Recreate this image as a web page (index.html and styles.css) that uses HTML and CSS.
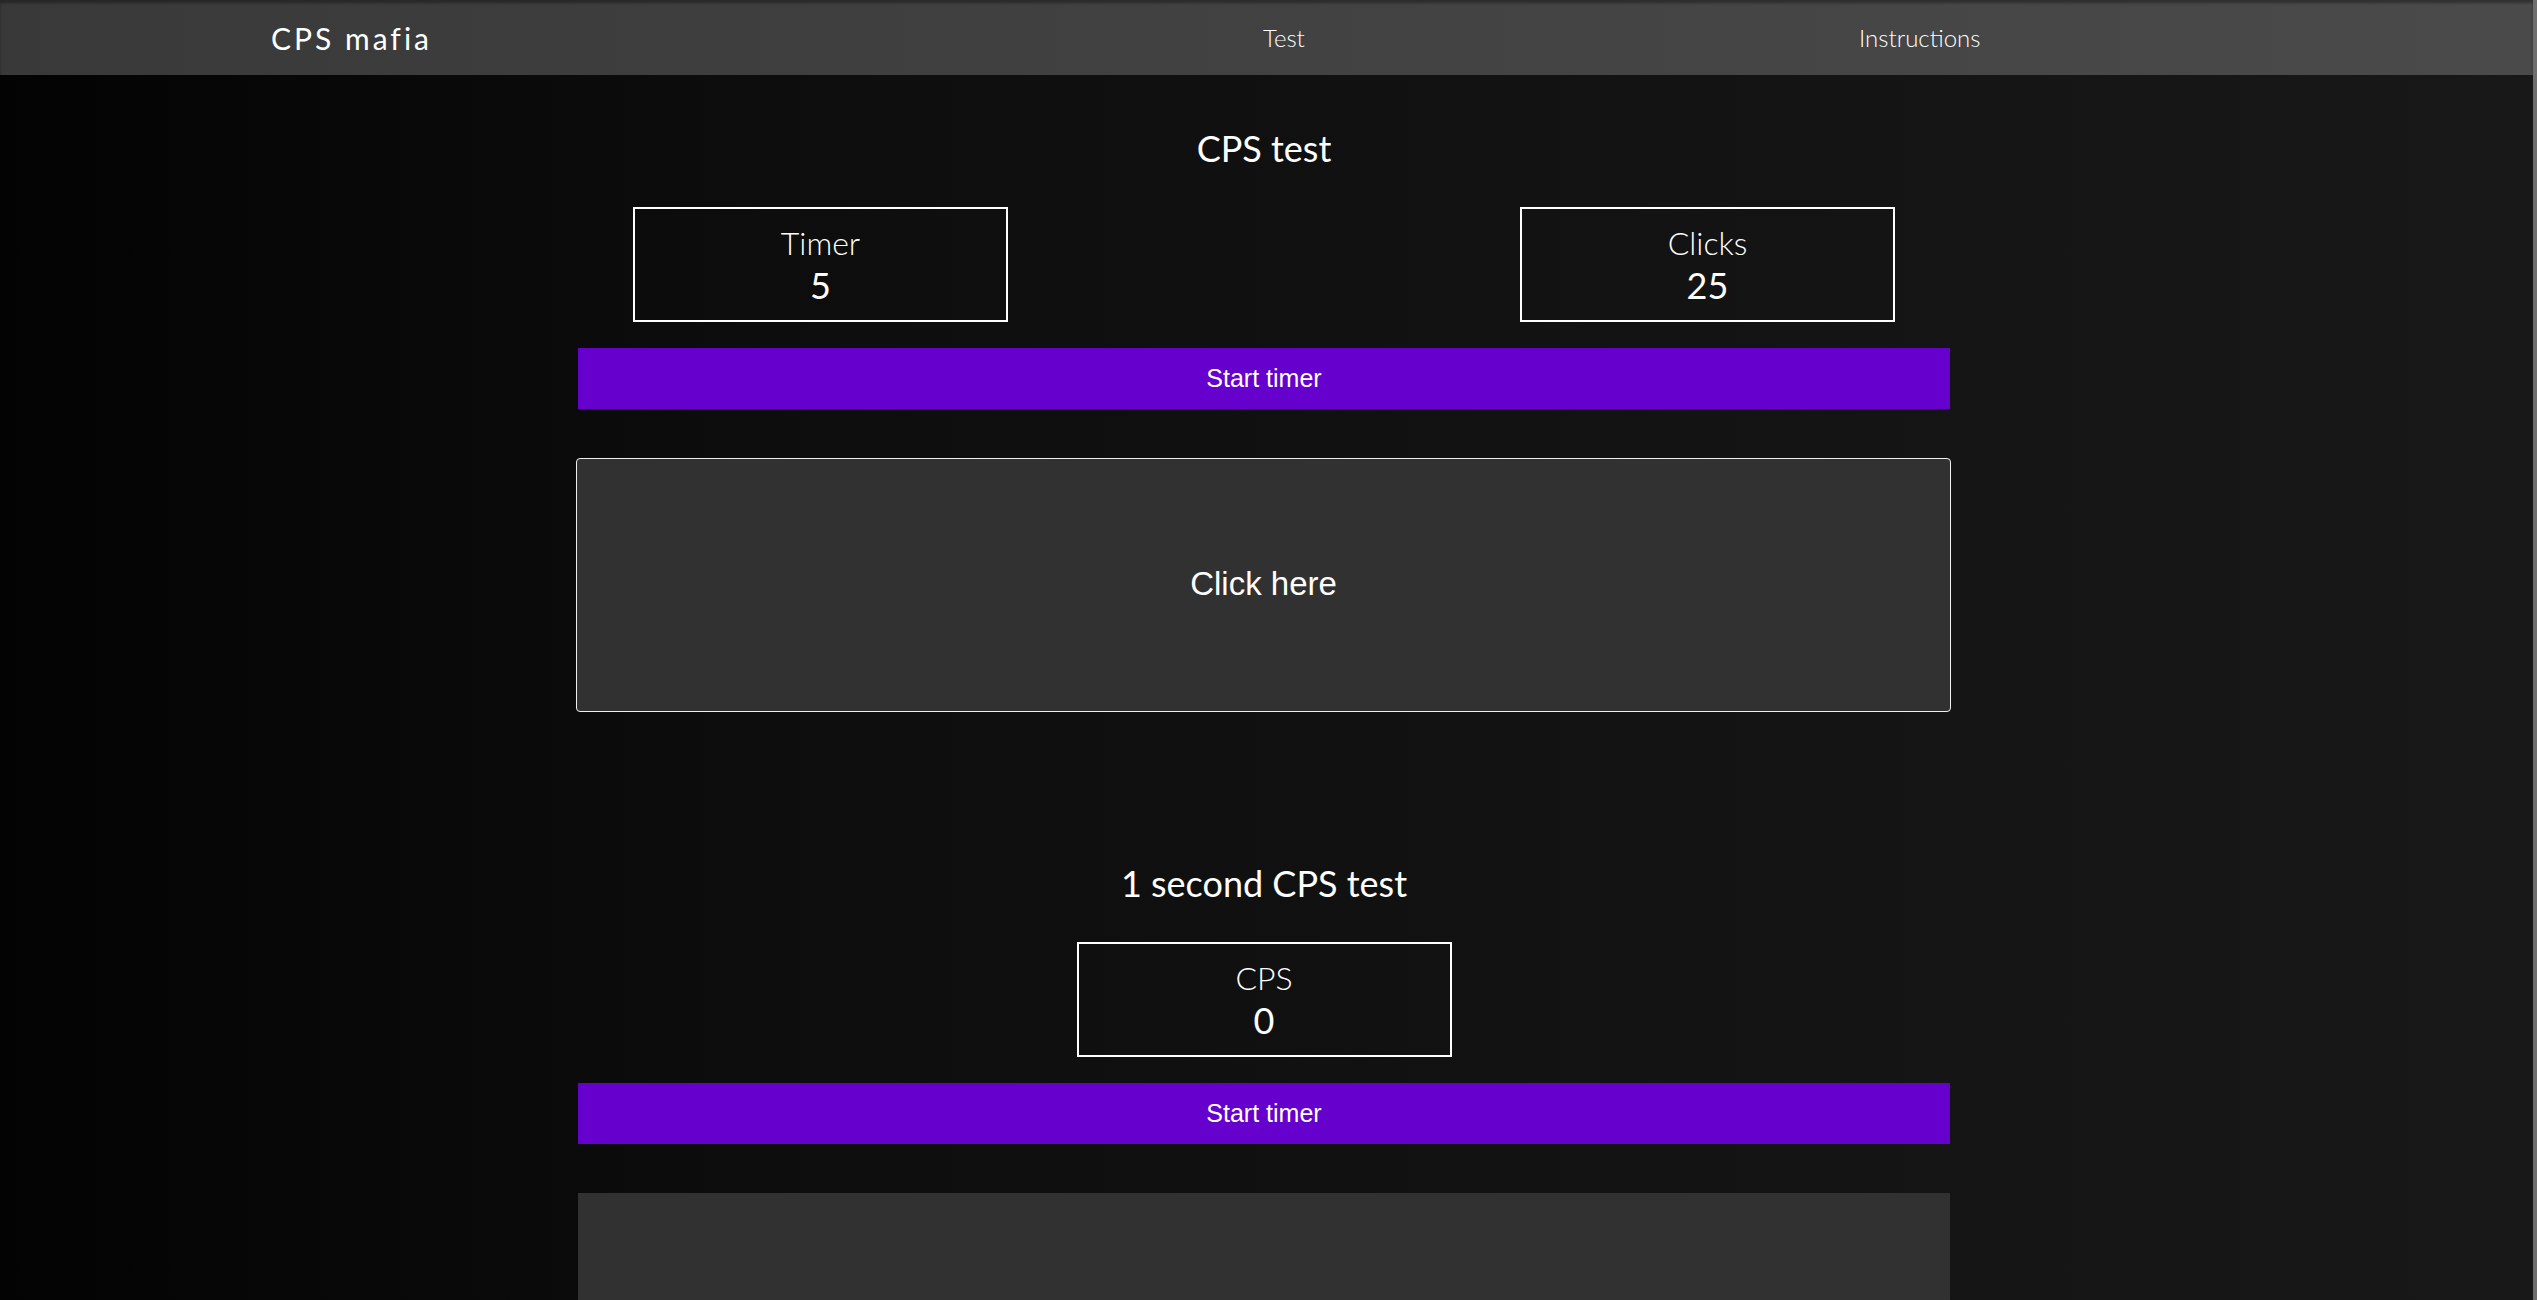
FILE: index.html
```html
<!DOCTYPE html>
<html lang="en">
<head>
<meta charset="utf-8">
<title>CPS mafia</title>
<link rel="stylesheet" href="styles.css">
</head>
<body>
<div class="page">
  <nav class="nav">
    <a class="brand" href="#">CPS mafia</a>
    <a class="nav-link" href="#">Test</a>
    <a class="nav-link" href="#">Instructions</a>
  </nav>
  <main class="main">
    <section class="test">
      <h2 class="title">CPS test</h2>
      <div class="stats">
        <div class="stat">
          <div class="stat-label">Timer</div>
          <div class="stat-value">5</div>
        </div>
        <div class="stat">
          <div class="stat-label">Clicks</div>
          <div class="stat-value">25</div>
        </div>
      </div>
      <button class="start">Start timer</button>
      <div class="click-area">Click here</div>
    </section>
    <section class="test second">
      <h2 class="title">1 second CPS test</h2>
      <div class="stats center">
        <div class="stat">
          <div class="stat-label">CPS</div>
          <div class="stat-value">0</div>
        </div>
      </div>
      <button class="start">Start timer</button>
      <div class="click-area plain"></div>
    </section>
  </main>
</div>
</body>
</html>
```

FILE: styles.css
```css
html, body {
  margin: 0;
  padding: 0;
  height: 100%;
  overflow: hidden;
}
body {
  background: #0e0e0e;
  font-family: "Lato", "Open Sans", sans-serif;
  color: #fff;
}
.page {
  height: 1300px;
  overflow: hidden;
  box-sizing: border-box;
  border-right: 4px solid #6e6e6e;
  background: linear-gradient(to right, #030303 0%, #0d0d0d 30%, #121212 60%, #181818 100%);
}
.nav {
  height: 75px;
  display: grid;
  grid-template-columns: 992px 596px auto;
  align-items: center;
  padding-left: 271px;
  background: linear-gradient(to right, #393939 0%, #404040 40%, #4a4a4a 100%);
  box-shadow: inset 0 3px 3px rgba(0, 0, 0, 0.35);
}
.nav a {
  color: #fff;
  text-decoration: none;
}
.brand {
  font-size: 30px;
  letter-spacing: 3px;
  font-weight: 400;
}
.nav-link {
  font-size: 24px;
  font-weight: 300;
}
.main {
  padding-right: 5px;
}
.test {
  width: 1372px;
  margin: 0 auto;
  padding-top: 51px;
}
.test.second {
  padding-top: 149px;
}
.title {
  margin: 0;
  font-size: 36px;
  line-height: 44px;
  font-weight: 400;
  text-align: center;
}
.stats {
  display: flex;
  justify-content: space-between;
  padding: 0 55px;
  margin-top: 37px;
}
.stats.center {
  justify-content: center;
}
.stat {
  width: 375px;
  height: 115px;
  box-sizing: border-box;
  border: 2px solid #fff;
  padding-top: 14px;
  text-align: center;
}
.stat-label {
  font-size: 32px;
  line-height: 40px;
  font-weight: 300;
}
.stat-value {
  font-size: 36px;
  line-height: 44px;
  font-weight: 400;
}
.start {
  display: block;
  width: 100%;
  height: 61px;
  margin-top: 26px;
  border: none;
  background: #6600cc;
  color: #fff;
  font-family: "Liberation Sans", Arial, sans-serif;
  font-size: 25px;
  padding: 0;
}
.click-area {
  margin-top: 49px;
  height: 254px;
  box-sizing: border-box;
  border: 1px solid #f0f0f0;
  border-radius: 4px;
  background: #313131;
  display: flex;
  align-items: center;
  justify-content: center;
  font-family: "Liberation Sans", Arial, sans-serif;
  font-size: 33px;
  padding-bottom: 2px;
  margin-left: -2px;
  margin-right: -1px;
}
.click-area.plain {
  border: none;
  border-radius: 0;
  margin-left: 0;
  margin-right: 0;
}
```
